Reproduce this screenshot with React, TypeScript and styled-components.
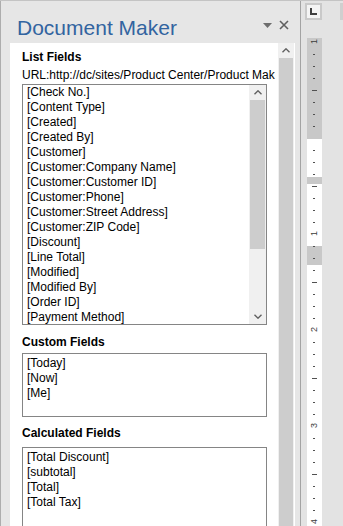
import React from "react";
import styled, { createGlobalStyle } from "styled-components";

const GlobalStyle = createGlobalStyle`
    html, body {
        margin: 0;
        padding: 0;
    }
    body {
        width: 343px;
        height: 526px;
        overflow: hidden;
        background: #e6e6e6;
        font-family: "Liberation Sans", Arial, sans-serif;
    }
`;

const Window = styled.div`
    display: flex;
    height: 526px;
    border-top: 1px solid #c4c4c4;
    box-sizing: border-box;
    overflow: hidden;
`;

const Pane = styled.div`
    width: 300px;
    flex: none;
    display: flex;
    flex-direction: column;
    background: #e6e6e6;
    border-left: 1px solid #adadad;
    box-sizing: border-box;
`;

const Header = styled.div`
    height: 42px;
    flex: none;
    display: flex;
    align-items: flex-start;
    padding: 15px 11px 0 16px;
    box-sizing: border-box;
`;

const Title = styled.div`
    flex: 1;
    font-size: 21px;
    line-height: 24px;
    color: #3264a0;
    white-space: nowrap;
`;

const Controls = styled.div`
    display: flex;
    align-items: center;
    gap: 7px;
    height: 10px;
    margin-top: 4px;
`;

const PaneBody = styled.div`
    flex: 1;
    min-height: 0;
    display: flex;
    padding: 0 6px 0 9px;
`;

const Panel = styled.div`
    width: 268px;
    flex: none;
    background: #ffffff;
    padding: 7px 0 0 12px;
    box-sizing: border-box;
    overflow: hidden;
`;

const SectionTitle = styled.div<{ $gap: number }>`
    margin-top: ${(p) => p.$gap}px;
    font-size: 12px;
    line-height: 15px;
    font-weight: bold;
    color: #000;
`;

const Url = styled.div`
    margin-top: 3px;
    font-size: 12px;
    line-height: 15px;
    white-space: nowrap;
    color: #000;
`;

const Box = styled.div<{ $height: number; $gap: number }>`
    margin-top: ${(p) => p.$gap}px;
    width: 245px;
    height: ${(p) => p.$height}px;
    border: 1px solid #858585;
    box-sizing: border-box;
    display: flex;
    overflow: hidden;
    background: #fff;
`;

const Items = styled.div<{ $padTop: number }>`
    flex: 1;
    padding: ${(p) => p.$padTop}px 4px 0 4px;
    font-size: 12px;
    line-height: 15px;
    color: #000;
    white-space: nowrap;
    overflow: hidden;
`;

const ScrollBar = styled.div<{ $width: number }>`
    width: ${(p) => p.$width}px;
    flex: none;
    display: flex;
    flex-direction: column;
    background: #f0f0f0;
`;

const ScrollButton = styled.div<{ $height: number }>`
    height: ${(p) => p.$height}px;
    flex: none;
    display: flex;
    align-items: center;
    justify-content: center;
    background: #f0f0f0;
`;

const ScrollTrack = styled.div`
    flex: 1;
    display: flex;
    flex-direction: column;
`;

const Thumb = styled.div<{ $height?: number }>`
    height: ${(p) => (p.$height ? `${p.$height}px` : "auto")};
    flex: ${(p) => (p.$height ? "none" : "1")};
    margin: 0 1px;
    background: #cdcdcd;
`;

const OuterScroll = styled(ScrollBar)`
    border-right: 1px solid #ffffff;
`;

const Divider = styled.div`
    width: 1px;
    flex: none;
    background: #a3a3a3;
`;

const DocArea = styled.div`
    flex: 1;
    display: flex;
    flex-direction: column;
    background: #e3e3e3;
    padding-left: 4px;
`;

const TopStrip = styled.div`
    height: 37px;
    flex: none;
    display: flex;
    align-items: flex-start;
    padding-top: 2px;
    box-sizing: border-box;
`;

const TabSelector = styled.div`
    width: 17px;
    height: 17px;
    box-sizing: border-box;
    border: 2px solid #c9c9c9;
    background: #f4f4f4;
    display: flex;
    align-items: center;
    justify-content: center;
`;

const Sliver = styled.div`
    margin-left: auto;
    width: 3px;
    height: 17px;
    background: #cfcfcf;
`;

const Ruler = styled.div`
    position: relative;
    margin-left: 2px;
    width: 15px;
    flex: 1;
    display: flex;
    flex-direction: column;
`;

const RulerBand = styled.div<{ $height?: number; $margin?: boolean }>`
    height: ${(p) => (p.$height ? `${p.$height}px` : "auto")};
    flex: ${(p) => (p.$height ? "none" : "1")};
    background: ${(p) => (p.$margin ? "#c8c8c8" : "#ffffff")};
`;

const RulerMarks = styled.svg`
    position: absolute;
    left: 0;
    top: 0;
`;

const RulerNumber = styled.span`
    position: absolute;
    left: 3px;
    width: 9px;
    height: 9px;
    margin-top: -5px;
    font-size: 9px;
    line-height: 9px;
    text-align: center;
    color: #3c3c3c;
    transform: rotate(-90deg);
`;

const listFields = [
    "[Check No.]",
    "[Content Type]",
    "[Created]",
    "[Created By]",
    "[Customer]",
    "[Customer:Company Name]",
    "[Customer:Customer ID]",
    "[Customer:Phone]",
    "[Customer:Street Address]",
    "[Customer:ZIP Code]",
    "[Discount]",
    "[Line Total]",
    "[Modified]",
    "[Modified By]",
    "[Order ID]",
    "[Payment Method]",
];

const customFields = ["[Today]", "[Now]", "[Me]"];
const calculatedFields = ["[Total Discount]", "[subtotal]", "[Total]", "[Total Tax]"];

const Chevron = ({ down }: { down?: boolean }) => (
    <svg width="8" height="5" viewBox="0 0 8 5">
        <polyline
            points={down ? "0.5,0.8 4,4.2 7.5,0.8" : "0.5,4.2 4,0.8 7.5,4.2"}
            fill="none"
            stroke="#606060"
            strokeWidth="1.4"
        />
    </svg>
);

// ruler positions are relative to the ruler top (y = 38 in the window)
const numbers = [
    { y: 4, label: "1" },
    { y: 196, label: "1" },
    { y: 292, label: "2" },
    { y: 388, label: "3" },
    { y: 484, label: "4" },
];

const ticks: { y: number; long: boolean }[] = [];
for (let y = 16; y < 490; y += 12) {
    const off = y - 100;
    if (off === 0 || off % 96 === 0) continue;
    ticks.push({ y, long: off % 48 === 0 });
}

const App: React.FC = () => {
    return (
        <>
            <GlobalStyle />
            <Window>
                <Pane>
                    <Header>
                        <Title>Document Maker</Title>
                        <Controls>
                            <svg width="9" height="5" viewBox="0 0 9 5">
                                <polygon points="0,0 9,0 4.5,5" fill="#6d6d6d" />
                            </svg>
                            <svg width="10" height="10" viewBox="0 0 10 10">
                                <path d="M1 1L9 9M9 1L1 9" stroke="#5f5f5f" strokeWidth="1.6" />
                            </svg>
                        </Controls>
                    </Header>
                    <PaneBody>
                        <Panel>
                            <SectionTitle $gap={0}>List Fields</SectionTitle>
                            <Url>URL:http://dc/sites/Product Center/Product Mak</Url>
                            <Box $gap={1} $height={241}>
                                <Items $padTop={0}>
                                    {listFields.map((f) => (
                                        <div key={f}>{f}</div>
                                    ))}
                                </Items>
                                <ScrollBar $width={17}>
                                    <ScrollButton $height={15}>
                                        <Chevron />
                                    </ScrollButton>
                                    <ScrollTrack>
                                        <Thumb $height={149} />
                                    </ScrollTrack>
                                    <ScrollButton $height={16}>
                                        <Chevron down />
                                    </ScrollButton>
                                </ScrollBar>
                            </Box>
                            <SectionTitle $gap={10}>Custom Fields</SectionTitle>
                            <Box $gap={3} $height={64}>
                                <Items $padTop={2}>
                                    {customFields.map((f) => (
                                        <div key={f}>{f}</div>
                                    ))}
                                </Items>
                            </Box>
                            <SectionTitle $gap={9}>Calculated Fields</SectionTitle>
                            <Box $gap={6} $height={120}>
                                <Items $padTop={2}>
                                    {calculatedFields.map((f) => (
                                        <div key={f}>{f}</div>
                                    ))}
                                </Items>
                            </Box>
                        </Panel>
                        <OuterScroll $width={16}>
                            <ScrollButton $height={15}>
                                <Chevron />
                            </ScrollButton>
                            <ScrollTrack>
                                <Thumb />
                            </ScrollTrack>
                        </OuterScroll>
                    </PaneBody>
                </Pane>
                <Divider />
                <DocArea>
                    <TopStrip>
                        <TabSelector>
                            <svg width="7" height="7" viewBox="0 0 7 7">
                                <path d="M1 0V6H7" fill="none" stroke="#404040" strokeWidth="2" />
                            </svg>
                        </TabSelector>
                        <Sliver />
                    </TopStrip>
                    <Ruler>
                        <RulerBand $margin $height={101} />
                        <RulerBand $height={38} />
                        <RulerBand $margin $height={7} />
                        <RulerBand $height={62} />
                        <RulerBand $margin $height={19} />
                        <RulerBand />
                        <RulerMarks width="15" height="490">
                            {ticks.map((t) => (
                                <rect
                                    key={t.y}
                                    x={t.long ? 5 : 6}
                                    y={t.y}
                                    width={t.long ? 5 : 2}
                                    height={1}
                                    fill="#505050"
                                />
                            ))}
                        </RulerMarks>
                        {numbers.map((n) => (
                            <RulerNumber key={n.y} style={{ top: n.y }}>
                                {n.label}
                            </RulerNumber>
                        ))}
                    </Ruler>
                </DocArea>
            </Window>
        </>
    );
};

export default App;
